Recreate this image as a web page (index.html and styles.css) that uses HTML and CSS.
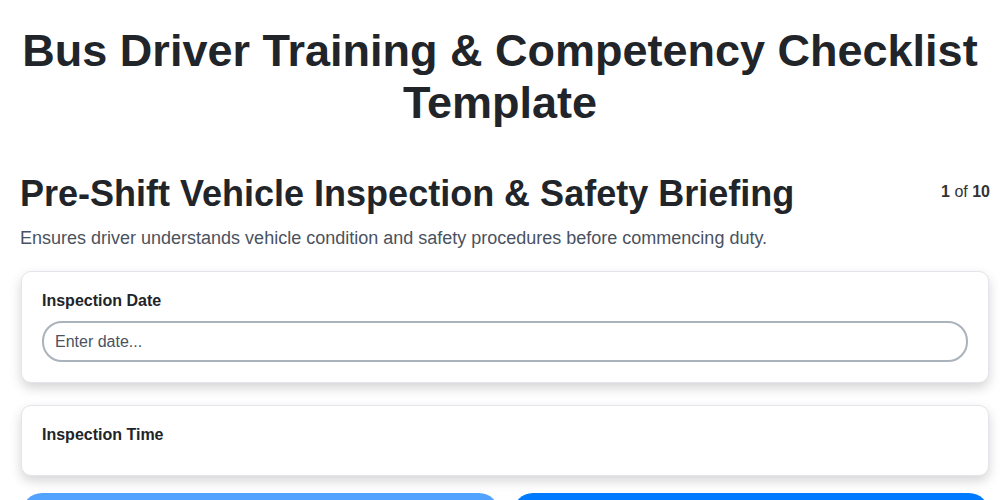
FILE: index.html
```html
<!DOCTYPE html>
<html lang="en">
<head>
  <meta charset="UTF-8" />
  <title>Bus Driver Training &amp; Competency Checklist Template</title>
  <meta name="viewport" content="width=device-width, initial-scale=1.0" />
  <link rel="stylesheet" href="styles.css">
</head>
<body>

<h1 class="page-title">Bus Driver Training &amp; Competency Checklist Template</h1>

<div class="section">
  <div class="section-head">
    <h2>Pre-Shift Vehicle Inspection &amp; Safety Briefing</h2>
    <div class="step-count"><b>1</b> of <b>10</b></div>
  </div>
  <p class="section-desc">Ensures driver understands vehicle condition and safety procedures before commencing duty.</p>

  <div class="field-card">
    <label for="inspection-date">Inspection Date</label>
    <input id="inspection-date" type="text" placeholder="Enter date...">
  </div>

  <div class="field-card short">
    <label>Inspection Time</label>
  </div>

  <div class="nav-buttons">
    <button class="btn btn-prev" disabled>Previous</button>
    <button class="btn btn-next">Next</button>
  </div>
</div>

</body>
</html>
```

FILE: styles.css
```css
* { box-sizing: border-box; margin: 0; padding: 0; }
body {
  font-family: "Liberation Sans", Arial, sans-serif;
  background: #fff;
  color: #212529;
}
.page-title {
  font-size: 45px;
  line-height: 52px;
  text-align: center;
  padding: 25px 20px 0;
  color: #212529;
}
.section {
  padding: 43px 10px 0 20px;
}
.section-head {
  display: flex;
  justify-content: space-between;
  align-items: flex-start;
}
.section-head h2 {
  font-size: 36px;
  line-height: 44px;
  color: #212529;
}
.step-count {
  font-size: 16px;
  color: #333;
  padding-top: 11px;
}
.section-desc {
  font-size: 18px;
  color: #4a5260;
  margin: 12px 0 1px;
}
.field-card {
  background: #fff;
  border: 1px solid #e4e5ea;
  border-radius: 10px;
  box-shadow: 0 5px 12px rgba(0,0,0,0.17);
  margin: 22px 1px 0;
  padding: 20px 20px 20px;
}
.field-card.short {
  height: 71px;
}
.field-card label {
  display: block;
  font-size: 16px;
  font-weight: bold;
  color: #212529;
  margin-bottom: 11px;
}
.field-card input {
  display: block;
  width: 100%;
  height: 41px;
  border: 2px solid #aab2bb;
  border-radius: 20px;
  padding: 0 11px;
  font-family: inherit;
  font-size: 16px;
  color: #495057;
}
.field-card input::placeholder {
  color: #4a5260;
}
.nav-buttons {
  display: flex;
  gap: 14px;
  margin-top: 17px;
  padding: 0 1px 0 2px;
}
.btn {
  flex: 1;
  height: 44px;
  border: none;
  border-radius: 20px;
  background: #007bff;
  color: #fff;
  font-family: inherit;
  font-size: 16px;
}
.btn-prev {
  background: #52a3ff;
}
```
